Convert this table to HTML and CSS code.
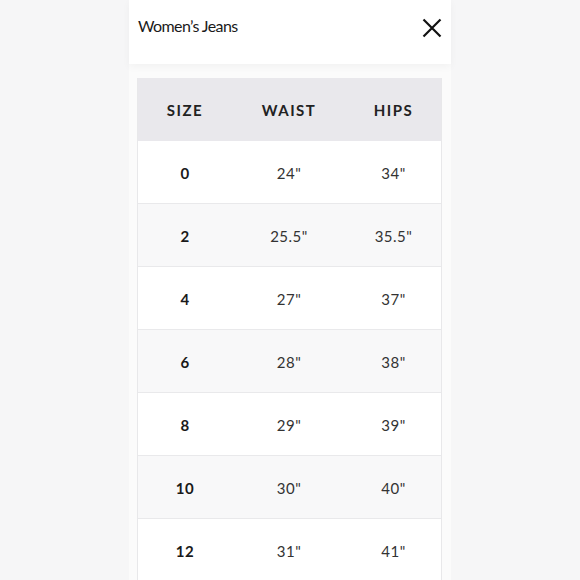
FILE: index.html
```html
<!DOCTYPE html>
<html>
<head>
<meta charset="utf-8">
<link rel="stylesheet" href="styles.css">
</head>
<body>
<div class="panel">
  <header class="head">
    <h1 class="title">Women’s Jeans</h1>
    <svg class="close" width="20" height="20" viewBox="0 0 20 20"><path d="M1.5 1.5 L18.5 18.5 M18.5 1.5 L1.5 18.5" stroke="#111" stroke-width="2.2" fill="none"/></svg>
  </header>
  <div class="body">
    <div class="table">
      <div class="row th"><span>SIZE</span><span>WAIST</span><span>HIPS</span></div>
      <div class="row"><span class="sz">0</span><span>24"</span><span>34"</span></div>
      <div class="row alt"><span class="sz">2</span><span>25.5"</span><span>35.5"</span></div>
      <div class="row"><span class="sz">4</span><span>27"</span><span>37"</span></div>
      <div class="row alt"><span class="sz">6</span><span>28"</span><span>38"</span></div>
      <div class="row"><span class="sz">8</span><span>29"</span><span>39"</span></div>
      <div class="row alt"><span class="sz">10</span><span>30"</span><span>40"</span></div>
      <div class="row"><span class="sz">12</span><span>31"</span><span>41"</span></div>
    </div>
  </div>
</div>
</body>
</html>
```
FILE: styles.css
```css
html, body { margin: 0; padding: 0; }
body {
  background: #f6f6f7;
  font-family: Lato, "Open Sans", sans-serif;
  color: #222;
  height: 580px;
  overflow: hidden;
}
.panel {
  width: 322px;
  margin-left: 129px;
  background: #fbfbfb;
  height: 580px;
}
.head {
  height: 64px;
  background: #fff;
  display: flex;
  align-items: flex-start;
  justify-content: space-between;
  padding: 0 9px 0 9px;
  box-shadow: 0 3px 8px rgba(0,0,0,0.04);
  position: relative;
}
.title {
  margin: 16px 0 0 0;
  font-size: 16px;
  font-weight: 400;
  letter-spacing: -0.6px;
  color: #1a1a1a;
}
.close { margin-top: 18px; }
.body { padding: 14px 9px 0 8px; }
.table {
  border-left: 1px solid #e8e8ea;
  border-right: 1px solid #e8e8ea;
}
.row {
  display: grid;
  grid-template-columns: 94px 114px 1fr;
  height: 60px;
  padding-top: 2px;
  box-sizing: content-box;
  align-items: center;
  text-align: center;
  background: #fff;
  border-bottom: 1px solid #e9e9eb;
  font-size: 15px;
  font-weight: 400;
  color: #333;
  letter-spacing: 0.5px;
}
.row.alt { background: #f8f8f9; }
.row.th {
  background: #e9e8ec;
  border-bottom: none;
  font-weight: 700;
  letter-spacing: 1.5px;
  color: #222;
  height: 62px;
  padding-top: 1px;
}
.sz { font-weight: 700; color: #1a1a1a; }
```
